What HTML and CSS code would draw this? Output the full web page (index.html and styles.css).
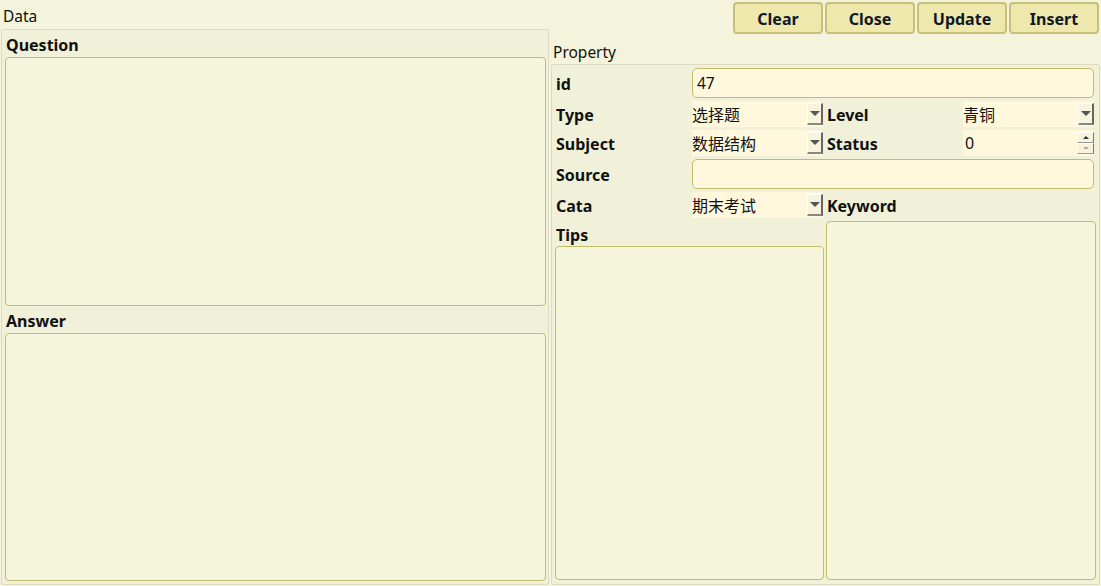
FILE: index.html
```html
<!DOCTYPE html>
<html lang="zh">
<head>
<meta charset="utf-8">
<title>Data</title>
<link rel="stylesheet" href="styles.css">
</head>
<body>
<div class="app">
  <section class="left">
    <div class="caption caption-data">Data</div>
    <div class="panel panel-data">
      <label class="blabel">Question</label>
      <div class="area area-q"></div>
      <label class="blabel blabel-a">Answer</label>
      <div class="area area-a"></div>
    </div>
  </section>
  <section class="right">
    <div class="toolbar">
      <button class="btn">Clear</button>
      <button class="btn">Close</button>
      <button class="btn">Update</button>
      <button class="btn">Insert</button>
    </div>
    <div class="caption caption-prop">Property</div>
    <div class="panel panel-prop">
      <div class="form">
        <div class="flabel">id</div>
        <div class="input span3">47</div>

        <div class="flabel">Type</div>
        <div class="combo"><span class="val">选择题</span><span class="arrow"><i></i></span></div>
        <div class="flabel">Level</div>
        <div class="combo"><span class="val">青铜</span><span class="arrow"><i></i></span></div>

        <div class="flabel">Subject</div>
        <div class="combo"><span class="val">数据结构</span><span class="arrow"><i></i></span></div>
        <div class="flabel">Status</div>
        <div class="spin"><span class="val">0</span><span class="spinbtns"><span class="sb up"><i></i></span><span class="sb down"><i></i></span></span></div>

        <div class="flabel">Source</div>
        <div class="input span3"></div>

        <div class="flabel">Cata</div>
        <div class="combo"><span class="val">期末考试</span><span class="arrow"><i></i></span></div>
        <div class="flabel">Keyword</div>
        <div class="empty"></div>

        <div class="flabel tips">Tips</div>
        <div class="area area-kw"></div>
        <div class="area area-tips"></div>
      </div>
    </div>
  </section>
</div>
</body>
</html>
```

FILE: styles.css
```css
* { box-sizing: border-box; }
html, body {
  margin: 0;
  padding: 0;
  background: #f4f4dc;
  width: 1101px;
  height: 586px;
  overflow: hidden;
  font-family: "Noto Sans", "Noto Sans CJK SC", sans-serif;
  color: #111;
}
.app {
  display: flex;
  height: 586px;
  gap: 2px;
  padding-left: 1px;
}
.left {
  width: 548px;
  display: flex;
  flex-direction: column;
}
.right {
  width: 549px;
  display: flex;
  flex-direction: column;
}
.caption {
  font-size: 15.5px;
  line-height: 18px;
  padding: 6px 0 0 2px;
  height: 28px;
}
.caption-data {
  height: 29px;
  padding-top: 7px;
}
.panel {
  border: 1px solid #dddcc2;
  border-radius: 2px;
  background: #f1f1d9;
  flex: 1;
  margin-bottom: 1px;
}
.panel-data {
  display: flex;
  flex-direction: column;
  padding: 6px 2px 3px 3px;
}
.blabel {
  font-weight: bold;
  font-size: 16px;
  line-height: 18px;
  height: 21px;
  padding-left: 1px;
}
.blabel-a {
  margin-top: 6px;
  height: 21px;
}
.area {
  background: #f5f5dc;
  border: 1px solid #c4bc6c;
  border-radius: 4px;
}
.area-q { height: 249px; }
.area-a { flex: 1; }

.toolbar {
  display: flex;
  justify-content: flex-end;
  gap: 2px;
  padding-top: 2px;
  padding-right: 1px;
  height: 36px;
}
.btn {
  width: 90px;
  height: 32px;
  background: #efe8ac;
  border: 2px solid #c7c07a;
  border-radius: 4px;
  font-family: "Noto Sans", sans-serif;
  font-weight: bold;
  font-size: 16px;
  color: #101828;
  padding: 1px 0 0;
}
.caption-prop {
  height: 28px;
  padding-top: 7px;
}
.panel-prop {
  padding: 3px 3px 4px 3px;
}
.form {
  display: grid;
  height: 100%;
  grid-template-columns: 137px 134px 137px 1fr;
  grid-template-rows: 30px 26px 26px 30px 26px 22px 1fr;
  row-gap: 3px;
}
.flabel {
  font-weight: bold;
  font-size: 16px;
  display: flex;
  align-items: center;
  padding: 1px 0 0 1px;
}
.span3 { grid-column: 2 / 5; }
.input {
  background: #fff8dc;
  border: 1px solid #c4bc6c;
  border-radius: 5px;
  font-size: 15.5px;
  display: flex;
  align-items: center;
  padding-left: 4px;
  margin-right: 2px;
}
.combo, .spin {
  display: flex;
  background: #fff8dc;
  width: 131px;
  font-size: 16px;
}
.val {
  flex: 1;
  display: flex;
  align-items: center;
}
.arrow {
  width: 16px;
  background: #f7f3dd;
  border-left: 1px solid #fff;
  border-top: 1px solid #fff;
  border-right: 2px solid #666;
  border-bottom: 2px solid #888;
  display: flex;
  align-items: center;
  justify-content: center;
  margin: 2px 0;
}
.arrow i {
  width: 0;
  height: 0;
  border-left: 5px solid transparent;
  border-right: 5px solid transparent;
  border-top: 5px solid #555;
}
.spin .val { padding-left: 2px; }
.spinbtns {
  width: 17px;
  display: flex;
  flex-direction: column;
  margin: 2px 0;
}
.sb {
  flex: 1;
  border-left: 1px solid #fff;
  border-top: 1px solid #fff;
  border-right: 1px solid #777;
  border-bottom: 1px solid #999;
  background: #f7f3dd;
  display: flex;
  align-items: center;
  justify-content: center;
}
.sb.up i {
  width: 0; height: 0;
  border-left: 3px solid transparent;
  border-right: 3px solid transparent;
  border-bottom: 3px solid #333;
}
.sb.down i {
  width: 0; height: 0;
  border-left: 3px solid transparent;
  border-right: 3px solid transparent;
  border-top: 3px solid #aaa;
}
.tips {
  grid-column: 1 / 3;
  grid-row: 6;
  align-items: center;
  padding-top: 5px;
}
.area-kw {
  grid-column: 3 / 5;
  grid-row: 6 / 8;
}
.area-tips {
  grid-column: 1 / 3;
  grid-row: 7;
  margin-right: 2px;
}
```
